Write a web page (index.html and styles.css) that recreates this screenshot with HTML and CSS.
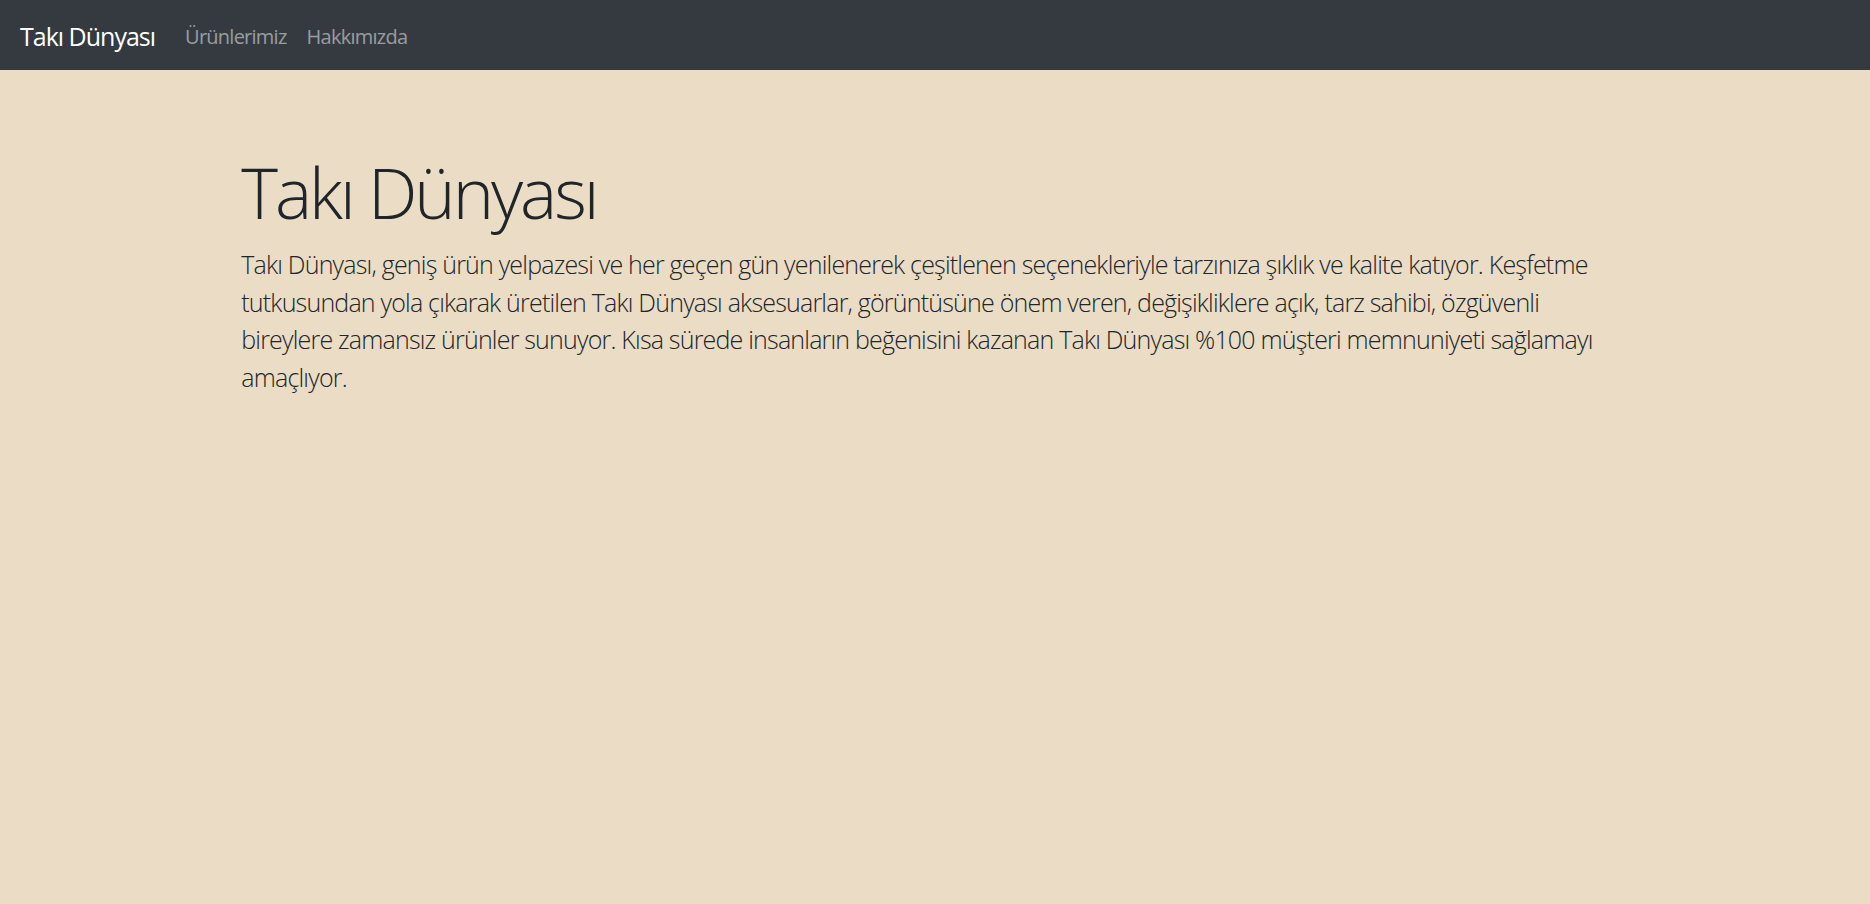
FILE: index.html
```html
<!DOCTYPE html>
<html lang="tr">
<head>
<meta charset="utf-8">
<title>Takı Dünyası</title>
<link rel="stylesheet" href="styles.css">
</head>
<body>
<nav class="navbar">
  <a class="brand" href="#">Takı Dünyası</a>
  <ul class="nav">
    <li><a class="nav-link" href="#">Ürünlerimiz</a></li>
    <li><a class="nav-link" href="#">Hakkımızda</a></li>
  </ul>
</nav>
<main class="jumbotron">
  <div class="container">
    <h1 class="display">Takı Dünyası</h1>
    <p class="lead">Takı Dünyası, geniş ürün yelpazesi ve her geçen gün yenilenerek çeşitlenen seçenekleriyle tarzınıza şıklık ve kalite katıyor. Keşfetme tutkusundan yola çıkarak üretilen Takı Dünyası aksesuarlar, görüntüsüne önem veren, değişikliklere açık, tarz sahibi, özgüvenli bireylere zamansız ürünler sunuyor. Kısa sürede insanların beğenisini kazanan Takı Dünyası %100 müşteri memnuniyeti sağlamayı amaçlıyor.</p>
  </div>
</main>
</body>
</html>
```
FILE: styles.css
```css
* { box-sizing: border-box; }
html, body { margin: 0; padding: 0; }
body {
  font-family: "Open Sans", "Noto Sans", "Liberation Sans", sans-serif;
  font-size: 20px;
  line-height: 1.5;
  color: #212529;
  background: #eadcc5;
  min-height: 904px;
}
.navbar {
  display: flex;
  align-items: center;
  height: 70px;
  padding: 10px 20px;
  background: #343a40;
}
.brand {
  font-size: 25px;
  line-height: 37.5px;
  padding: 8px 0 4px;
  margin-right: 20px;
  color: #fff;
  text-decoration: none;
  letter-spacing: -1px;
}
.nav {
  display: flex;
  list-style: none;
  margin: 0;
  padding: 0;
}
.nav-link {
  display: block;
  padding: 12px 10px 8px;
  color: rgba(255,255,255,0.5);
  text-decoration: none;
  font-size: 20px;
  letter-spacing: -0.75px;
}
.jumbotron {
  padding: 80px 0;
}
.container {
  max-width: 1425px;
  margin: 0 auto;
  padding: 0 18.75px;
}
.display {
  font-size: 70px;
  font-weight: 300;
  line-height: 1.2;
  margin: 0 0 10px;
  letter-spacing: -3px;
}
.lead {
  font-size: 25px;
  font-weight: 300;
  line-height: 37.5px;
  margin: 0 0 20px;
  padding-top: 2px;
  letter-spacing: -0.8px;
}
```
